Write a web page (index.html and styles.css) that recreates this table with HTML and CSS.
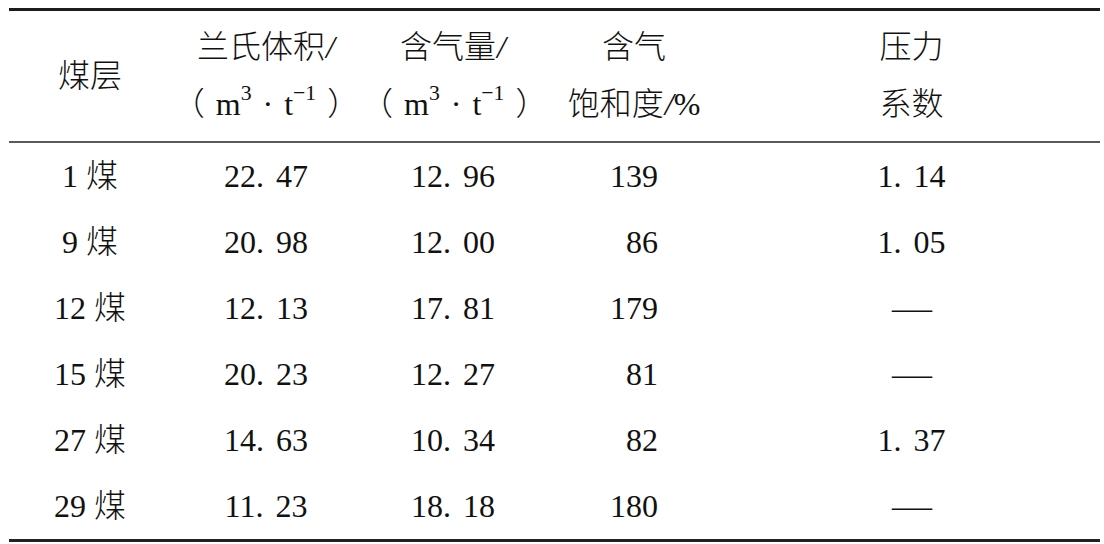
FILE: index.html
```html
<!DOCTYPE html>
<html lang="zh-CN">
<head>
    <meta charset="UTF-8">
    <meta name="viewport" content="width=device-width, initial-scale=1.0">
    <title>煤层含气性参数</title>
    <link rel="stylesheet" href="styles.css">
</head>
<body>
    <div class="table-wrap">
        <table class="coal-table">
            <colgroup>
                <col class="c-seam">
                <col class="c-vol">
                <col class="c-gas">
                <col class="c-sat">
                <col class="c-press">
            </colgroup>
            <thead>
                <tr>
                    <th>煤层</th>
                    <th>兰氏体积<span class="slash">/</span><br><span class="unit">（ m<sup>3</sup> · t<sup>−1</sup> ）</span></th>
                    <th>含气量<span class="slash">/</span><br><span class="unit">（ m<sup>3</sup> · t<sup>−1</sup> ）</span></th>
                    <th>含气<br>饱和度<span class="slash">/</span>%</th>
                    <th>压力<br>系数</th>
                </tr>
            </thead>
            <tbody>
                <tr>
                    <td>1 煤</td>
                    <td>22<span class="pt">.</span>47</td>
                    <td>12<span class="pt">.</span>96</td>
                    <td class="right">139</td>
                    <td>1<span class="pt">.</span>14</td>
                </tr>
                <tr>
                    <td>9 煤</td>
                    <td>20<span class="pt">.</span>98</td>
                    <td>12<span class="pt">.</span>00</td>
                    <td class="right">86</td>
                    <td>1<span class="pt">.</span>05</td>
                </tr>
                <tr>
                    <td>12 煤</td>
                    <td>12<span class="pt">.</span>13</td>
                    <td>17<span class="pt">.</span>81</td>
                    <td class="right">179</td>
                    <td><span class="dash">—</span></td>
                </tr>
                <tr>
                    <td>15 煤</td>
                    <td>20<span class="pt">.</span>23</td>
                    <td>12<span class="pt">.</span>27</td>
                    <td class="right">81</td>
                    <td><span class="dash">—</span></td>
                </tr>
                <tr>
                    <td>27 煤</td>
                    <td>14<span class="pt">.</span>63</td>
                    <td>10<span class="pt">.</span>34</td>
                    <td class="right">82</td>
                    <td>1<span class="pt">.</span>37</td>
                </tr>
                <tr>
                    <td>29 煤</td>
                    <td>11<span class="pt">.</span>23</td>
                    <td>18<span class="pt">.</span>18</td>
                    <td class="right">180</td>
                    <td><span class="dash">—</span></td>
                </tr>
            </tbody>
        </table>
    </div>
</body>
</html>
```

FILE: styles.css
```css
* {
    margin: 0;
    padding: 0;
    box-sizing: border-box;
}

body {
    background: #ffffff;
    color: #111111;
    font-family: "Liberation Serif", "Noto Sans CJK SC", serif;
    font-weight: 300;
    font-size: 32px;
    padding: 8px 4px 0 9px;
}

.table-wrap {
    width: 1091px;
    border-top: 3px solid #1c1c1c;
    border-bottom: 3px solid #222222;
}

.coal-table {
    width: 100%;
    border-collapse: separate;
    border-spacing: 0;
    table-layout: fixed;
}

.c-seam  { width: 162px; }
.c-vol   { width: 190px; }
.c-gas   { width: 184px; }
.c-sat   { width: 178px; }
.c-press { width: 377px; }

.coal-table th {
    font-weight: 300;
    line-height: 57px;
    padding: 8px 0;
    text-align: center;
    vertical-align: middle;
    border-bottom: 2px solid #5a5a5a;
    white-space: nowrap;
}

.coal-table td {
    line-height: 66px;
    padding: 0;
    text-align: center;
    vertical-align: middle;
    white-space: nowrap;
}

.coal-table td.right {
    text-align: right;
    padding-right: 65px;
}

.slash {
    font-style: italic;
    margin-left: 1px;
}

.unit {
    word-spacing: 3px;
}

sup {
    font-size: 0.68em;
    line-height: 0;
    vertical-align: 0.7em;
}

.pt {
    margin-right: 12px;
}

.dash {
    display: inline-block;
    transform: scaleX(1.25);
}
```
